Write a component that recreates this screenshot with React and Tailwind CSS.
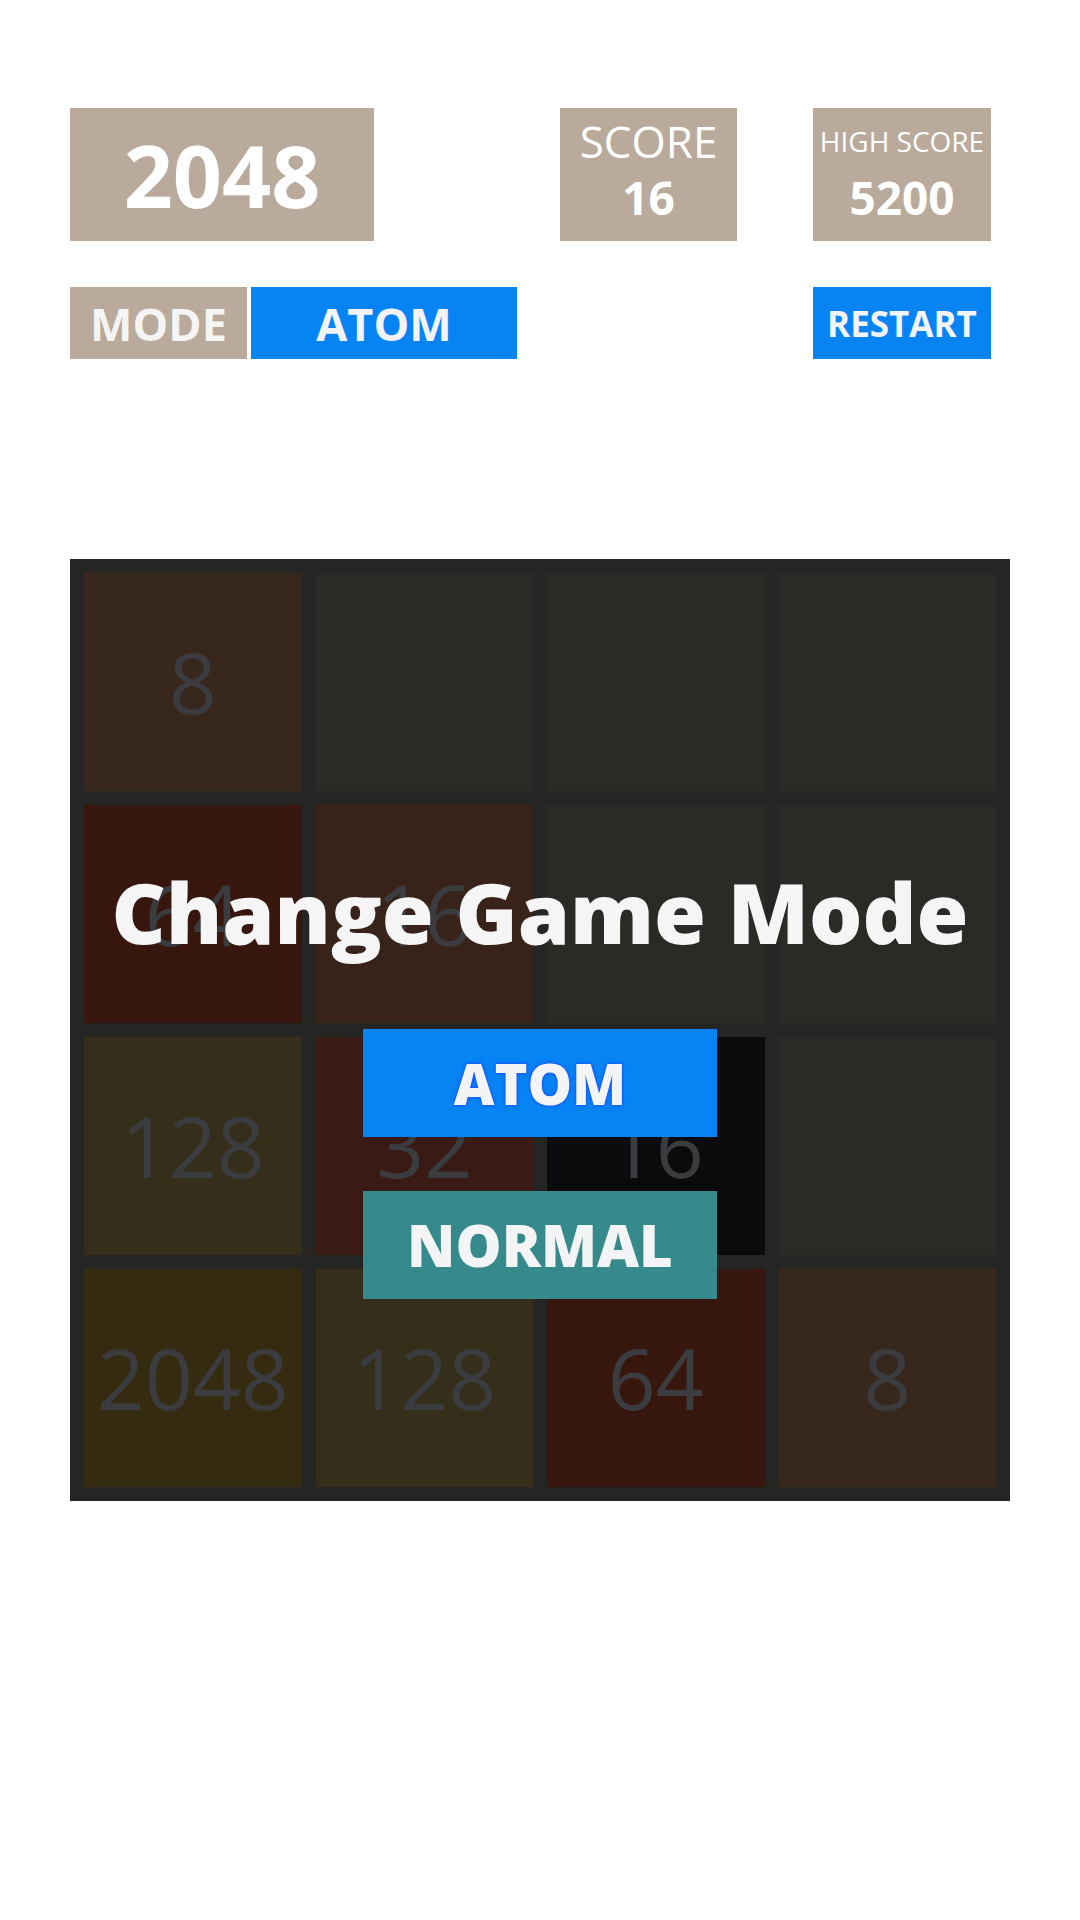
import React from "react";

const FONT = { fontFamily: '"Open Sans", "Noto Sans", sans-serif' };

// Board state: value plus the dimmed tile colour shown under the overlay
const TILES = [
  { v: 8, bg: "bg-[#38271c]" },
  { v: null, bg: "bg-[#2c2a26]" },
  { v: null, bg: "bg-[#2c2a26]" },
  { v: null, bg: "bg-[#2c2a26]" },
  { v: 64, bg: "bg-[#37160e]" },
  { v: 16, bg: "bg-[#38231a]" },
  { v: null, bg: "bg-[#2c2a26]" },
  { v: null, bg: "bg-[#2c2a26]" },
  { v: 128, bg: "bg-[#352e1b]" },
  { v: 32, bg: "bg-[#391a14]" },
  { v: 16, bg: "bg-[#0a0b0d]" },
  { v: null, bg: "bg-[#2c2a26]" },
  { v: 2048, bg: "bg-[#352b10]" },
  { v: 128, bg: "bg-[#352e1b]" },
  { v: 64, bg: "bg-[#37160e]" },
  { v: 8, bg: "bg-[#38271c]" },
];

function Tile({ v, bg }) {
  return (
    <div className={`h-[218px] flex items-center justify-center ${bg}`}>
      {v !== null && (
        <span className="text-[84px] leading-none font-normal text-[#3a3c3f]">{v}</span>
      )}
    </div>
  );
}

export default function App() {
  return (
    <div className="min-h-[1920px] w-[1080px] bg-white px-[70px] pt-[108px]" style={FONT}>
      {/* Header: title and scores */}
      <div className="flex items-start">
        <div className="w-[304px] h-[133px] bg-[#b9aa9c] flex items-center justify-center">
          <span className="text-[86px] leading-none font-bold text-white">2048</span>
        </div>
        <div className="ml-[186px] w-[177px] h-[133px] bg-[#b9aa9c] flex flex-col items-center text-white">
          <span className="mt-[11px] text-[44px] leading-none font-normal">SCORE</span>
          <span className="mt-[11px] text-[46px] leading-none font-bold">16</span>
        </div>
        <div className="ml-[76px] w-[178px] h-[133px] bg-[#b9aa9c] flex flex-col items-center text-white">
          <span className="mt-[19px] text-[28px] leading-none font-normal whitespace-nowrap">HIGH SCORE</span>
          <span className="mt-[19px] text-[46px] leading-none font-bold">5200</span>
        </div>
      </div>

      {/* Mode selector and restart */}
      <div className="flex items-start mt-[46px]">
        <div className="w-[177px] h-[72px] bg-[#b9aa9c] flex items-center justify-center">
          <span className="text-[45px] leading-none font-bold text-[#f4f4f4]">MODE</span>
        </div>
        <div className="ml-[4px] w-[266px] h-[72px] bg-[#0784f4] flex items-center justify-center">
          <span className="text-[45px] leading-none font-bold text-[#f4f4f4]">ATOM</span>
        </div>
        <div className="ml-[296px] w-[178px] h-[72px] bg-[#0784f4] flex items-center justify-center">
          <span className="text-[35px] leading-none font-bold text-[#f4f4f4]">RESTART</span>
        </div>
      </div>

      {/* Board with mode-change overlay */}
      <div className="relative mt-[200px] w-[940px] bg-[#252523] p-[14px]">
        <div className="grid grid-cols-4 gap-[14px]">
          {TILES.map((t, i) => (
            <Tile key={i} v={t.v} bg={t.bg} />
          ))}
        </div>
        <div className="absolute inset-0 flex flex-col items-center">
          <div className="mt-[296px] h-[114px] text-[84px] leading-[114px] font-extrabold text-[#f5f5f5] whitespace-nowrap">
            Change Game Mode
          </div>
          <button className="mt-[60px] w-[354px] h-[108px] bg-[#0784f4] flex items-center justify-center">
            <span
              className="text-[56px] leading-none font-extrabold text-[#f3f4f5]"
              style={{ textShadow: "0 0 4px #1a4dff, 0 0 2px #1a4dff" }}
            >
              ATOM
            </span>
          </button>
          <button className="mt-[54px] w-[354px] h-[108px] bg-[#368a8b] flex items-center justify-center">
            <span className="text-[58px] leading-none font-extrabold text-[#f3f4f5]">NORMAL</span>
          </button>
        </div>
      </div>
    </div>
  );
}
